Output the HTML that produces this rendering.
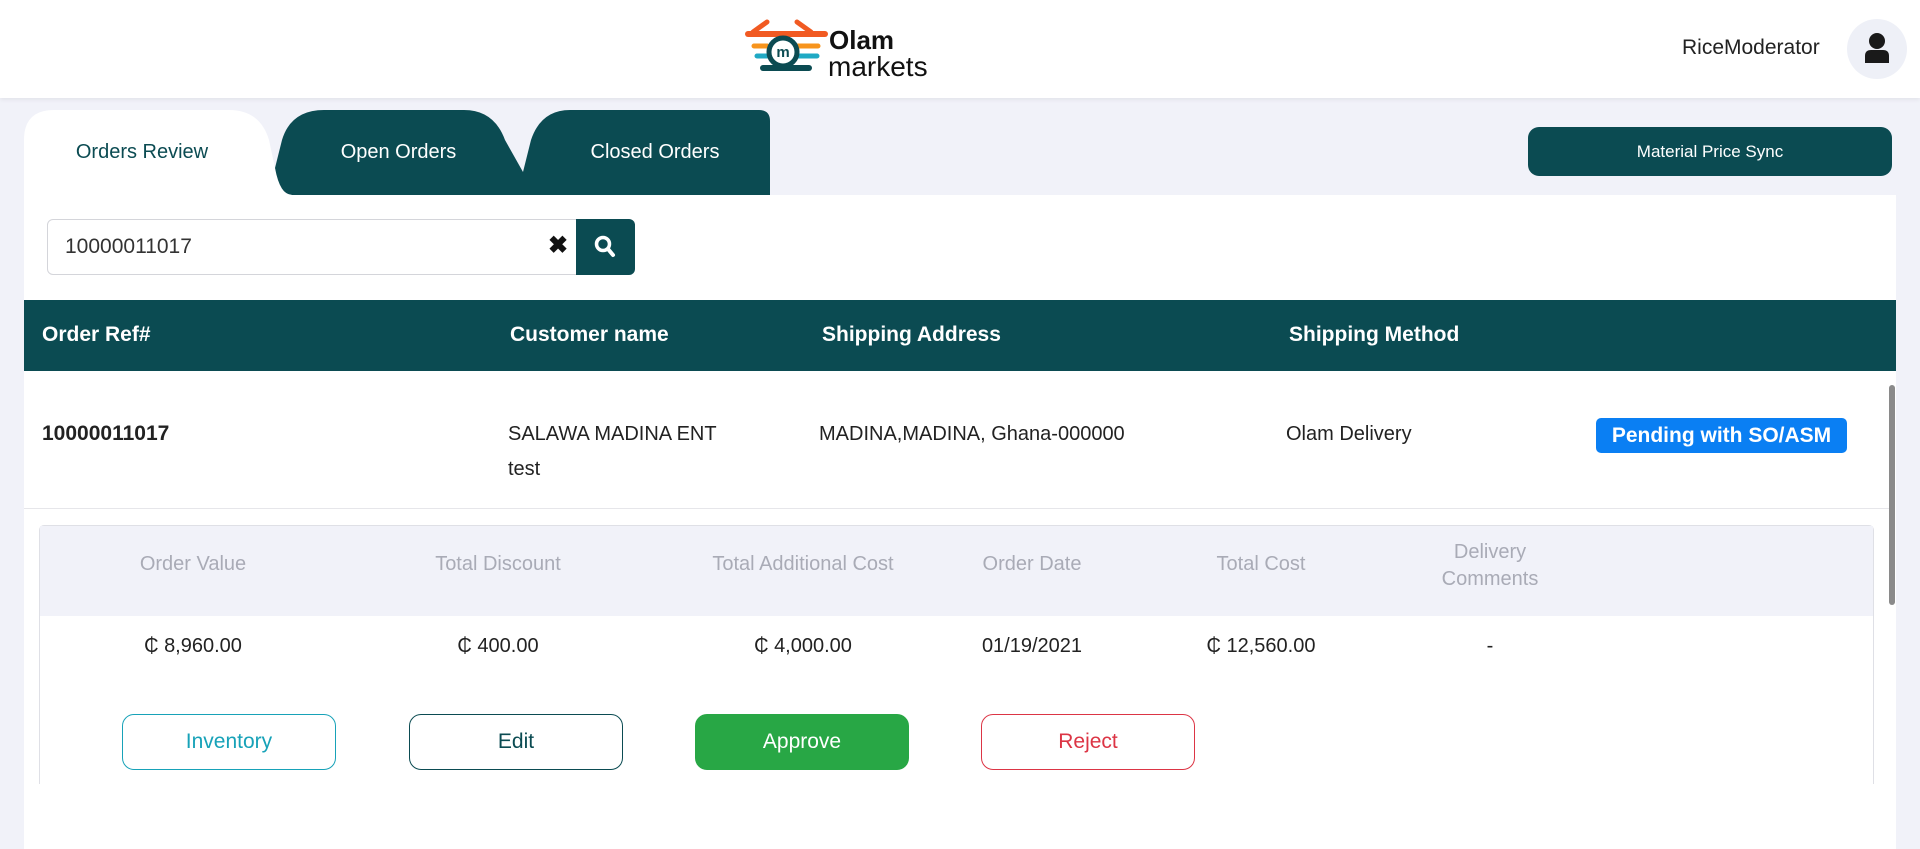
<!DOCTYPE html>
<html><head><meta charset="utf-8"><style>
*{box-sizing:border-box;margin:0;padding:0}
body{width:1920px;height:849px;overflow:hidden;background:#f1f2f9;font-family:"Liberation Sans",sans-serif;position:relative;color:#222}
.a{position:absolute}
.hdr{left:0;top:0;width:1920px;height:98px;background:#fff;box-shadow:0 2px 4px rgba(0,0,0,.06)}
.card{left:24px;top:195px;width:1872px;height:654px;background:#fff}
.tab{top:110px;height:85px;display:flex;align-items:center;justify-content:center;font-size:20px}
.th{font-size:21px;font-weight:bold;color:#fff;top:323px}
.lbl{font-size:20px;color:#a9abb6;text-align:center;width:240px}
.val{font-size:20px;color:#222;text-align:center;width:240px;top:635px}
.btn{top:714px;width:214px;height:56px;border-radius:12px;display:flex;align-items:center;justify-content:center;font-size:21px;border:1px solid}
</style></head><body>
<div class="a hdr"></div>
<svg class="a" style="left:745px;top:18px" width="85" height="66" viewBox="0 0 85 66">
<g stroke-linecap="round" fill="none">
<path d="M22 4 L8 14 M52 4 L66 14" stroke="#f15a22" stroke-width="5"/>
<path d="M3 16 H80" stroke="#f15a22" stroke-width="6"/>
<path d="M9 28 H22 M53 28 H73" stroke="#f7941d" stroke-width="5"/>
<path d="M12 38 H22 M53 38 H72" stroke="#1fa9c4" stroke-width="5"/>
<path d="M18 50 H64" stroke="#0b4b52" stroke-width="6"/>
<circle cx="38" cy="34" r="14" stroke="#0b4b52" stroke-width="5" fill="#fff"/>
</g>
<text x="38" y="39" font-size="15" font-weight="bold" fill="#0b4b52" text-anchor="middle" font-family="Liberation Sans">m</text>
</svg>
<div class="a" style="left:829px;top:26px;font-size:26px;font-weight:bold;color:#111;line-height:28px">Olam</div>
<div class="a" style="left:828px;top:53px;font-size:28px;color:#111;line-height:28px">markets</div>
<div class="a" style="left:1682px;top:36px;font-size:21px;color:#222">RiceModerator</div>
<div class="a" style="left:1847px;top:19px;width:60px;height:60px;border-radius:50%;background:#eef0f7"></div>
<svg class="a" style="left:1864px;top:32px" width="26" height="32" viewBox="0 0 26 32"><circle cx="13" cy="9" r="8" fill="#1a1a1a"/><path d="M1 31 V24 Q1 18 7 18 H19 Q25 18 25 24 V31 Z" fill="#1a1a1a"/></svg>

<div class="a card"></div>
<svg class="a" style="left:24px;top:110px" width="750" height="86" viewBox="0 0 750 86">
<path d="M268 85 Q251 82 251 58 L258 30 Q267 0 300 0 H440 Q470 0 481 30 L499 62 L507 30 Q517 0 546 0 H735 Q746 0 746 11 V85 Z" fill="#0b4b52"/>
<path d="M0 85 V30 Q0 0 30 0 H205 Q236 0 245 30 L251 58 Q256 85 268 85 Z" fill="#fff"/>
</svg>
<div class="a tab" style="left:24px;width:236px;color:#0b4b52">Orders Review</div>
<div class="a tab" style="left:285px;width:227px;color:#fff">Open Orders</div>
<div class="a tab" style="left:540px;width:230px;color:#fff">Closed Orders</div>
<div class="a" style="left:1528px;top:127px;width:364px;height:49px;border-radius:11px;background:#0b4b52;color:#fff;font-size:17px;display:flex;align-items:center;justify-content:center">Material Price Sync</div>

<div class="a" style="left:47px;top:219px;width:540px;height:56px;border:1px solid #d4d5da;border-radius:6px"></div>
<div class="a" style="left:65px;top:235px;font-size:21px;color:#333">10000011017</div>
<div class="a" style="left:548px;top:231px;font-size:24px;font-weight:bold;color:#111">✖</div>
<div class="a" style="left:576px;top:219px;width:59px;height:56px;background:#0b4b52;border-radius:0 6px 6px 0"></div>
<svg class="a" style="left:594px;top:235px" width="22" height="24" viewBox="0 0 22 24"><circle cx="9" cy="9" r="6.5" stroke="#fff" stroke-width="3.5" fill="none"/><path d="M14 14 L19 20" stroke="#fff" stroke-width="4" stroke-linecap="round"/></svg>

<div class="a" style="left:24px;top:300px;width:1872px;height:71px;background:#0b4b52"></div>
<div class="a th" style="left:42px">Order Ref#</div>
<div class="a th" style="left:510px">Customer name</div>
<div class="a th" style="left:822px">Shipping Address</div>
<div class="a th" style="left:1289px">Shipping Method</div>

<div class="a" style="left:42px;top:422px;font-size:21px;font-weight:bold;color:#222">10000011017</div>
<div class="a" style="left:508px;top:417px;font-size:20px;line-height:35px;color:#222">SALAWA MADINA ENT<br>test</div>
<div class="a" style="left:819px;top:423px;font-size:20px;color:#222">MADINA,MADINA, Ghana-000000</div>
<div class="a" style="left:1286px;top:423px;font-size:20px;color:#222">Olam Delivery</div>
<div class="a" style="left:1596px;top:418px;width:251px;height:35px;border-radius:5px;background:#0a7ff3;color:#fff;font-size:21px;font-weight:bold;display:flex;align-items:center;justify-content:center">Pending with SO/ASM</div>
<div class="a" style="left:24px;top:508px;width:1866px;height:1px;background:#e6e6ea"></div>
<div class="a" style="left:1889px;top:385px;width:6px;height:220px;border-radius:3px;background:#8a8a8a"></div>

<div class="a" style="left:39px;top:525px;width:1835px;height:259px;border:1px solid #dfe0e6;border-bottom:none;border-radius:5px 5px 0 0"></div>
<div class="a" style="left:40px;top:526px;width:1833px;height:90px;background:#f1f2f9"></div>
<div class="a lbl" style="left:73px;top:553px">Order Value</div>
<div class="a lbl" style="left:378px;top:553px">Total Discount</div>
<div class="a lbl" style="left:683px;top:553px;width:240px">Total Additional Cost</div>
<div class="a lbl" style="left:912px;top:553px">Order Date</div>
<div class="a lbl" style="left:1141px;top:553px">Total Cost</div>
<div class="a lbl" style="left:1370px;top:539px;line-height:27px">Delivery<br>Comments</div>
<div class="a val" style="left:73px">₵ 8,960.00</div>
<div class="a val" style="left:378px">₵ 400.00</div>
<div class="a val" style="left:683px">₵ 4,000.00</div>
<div class="a val" style="left:912px">01/19/2021</div>
<div class="a val" style="left:1141px">₵ 12,560.00</div>
<div class="a val" style="left:1370px">-</div>
<div class="a btn" style="left:122px;border-color:#17a2b8;color:#17a2b8">Inventory</div>
<div class="a btn" style="left:409px;border-color:#0b4b52;color:#0b4b52">Edit</div>
<div class="a btn" style="left:695px;border-color:#28a745;background:#28a745;color:#fff">Approve</div>
<div class="a btn" style="left:981px;border-color:#dc3545;color:#dc3545">Reject</div>
</body></html>
